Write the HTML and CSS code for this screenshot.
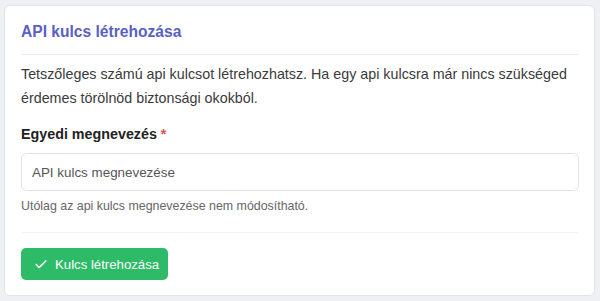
FILE: index.html
```html
<!DOCTYPE html>
<html lang="hu">
<head>
    <meta charset="UTF-8">
    <meta name="viewport" content="width=device-width, initial-scale=1.0">
    <title>API kulcs létrehozása</title>
    <link rel="stylesheet" href="styles.css">
</head>
<body>
    <div class="card">
        <h2 class="card-title">API kulcs létrehozása</h2>
        <p class="intro">Tetszőleges számú api kulcsot létrehozhatsz. Ha egy api kulcsra már nincs szükséged érdemes törölnöd biztonsági okokból.</p>
        <form id="keyForm">
            <label for="keyName" class="label">Egyedi megnevezés <span class="req">*</span></label>
            <input type="text" id="keyName" placeholder="API kulcs megnevezése">
            <div class="help">Utólag az api kulcs megnevezése nem módosítható.</div>
            <div class="actions">
                <button type="submit" class="btn-success">
                    <svg width="14" height="14" viewBox="0 0 16 16" fill="none" stroke="currentColor" stroke-width="1.8" stroke-linecap="round" stroke-linejoin="round"><path d="M2.5 8.5l3.5 3.5 7.5-7.5"/></svg>
                    Kulcs létrehozása
                </button>
            </div>
        </form>
    </div>
</body>
</html>
```

FILE: styles.css
```css
body {
    margin: 0;
    padding: 5px 5px 5px 4px;
    background: #eef0f4;
    font-family: "Liberation Sans", Arial, sans-serif;
    color: #333;
}
.card {
    background: #fff;
    border: 1px solid #e2e4ea;
    border-radius: 6px;
    padding: 14px 15px 15px 16px;
}
.card-title {
    margin: 0;
    font-size: 15.6px;
    line-height: 24px;
    font-weight: bold;
    color: #5a5fc8;
    padding-bottom: 10px;
    border-bottom: 1px solid #eceef2;
}
.intro {
    margin: 7px 0 0;
    font-size: 14.3px;
    line-height: 24px;
    color: #3a3a3a;
}
#keyForm {
    margin-top: 14px;
}
.label {
    display: block;
    font-size: 14.3px;
    font-weight: bold;
    color: #222;
    line-height: 20px;
}
.req {
    color: #e05252;
}
#keyForm input {
    display: block;
    box-sizing: border-box;
    width: 100%;
    height: 38px;
    margin-top: 9px;
    padding: 0 10px;
    border: 1px solid #e0e2e7;
    border-radius: 6px;
    font-family: inherit;
    font-size: 13.4px;
    color: #333;
}
#keyForm input::placeholder {
    color: #555;
}
.help {
    margin-top: 7px;
    font-size: 12.4px;
    line-height: 16px;
    color: #666;
}
.actions {
    margin-top: 18px;
    padding-top: 15px;
    border-top: 1px solid #f0f1f4;
}
.btn-success {
    display: inline-flex;
    align-items: center;
    gap: 7px;
    height: 32px;
    padding: 0 9px 0 13px;
    border: none;
    border-radius: 5px;
    background: #2dbb67;
    color: #fff;
    font-family: inherit;
    font-size: 13.2px;
}
```
